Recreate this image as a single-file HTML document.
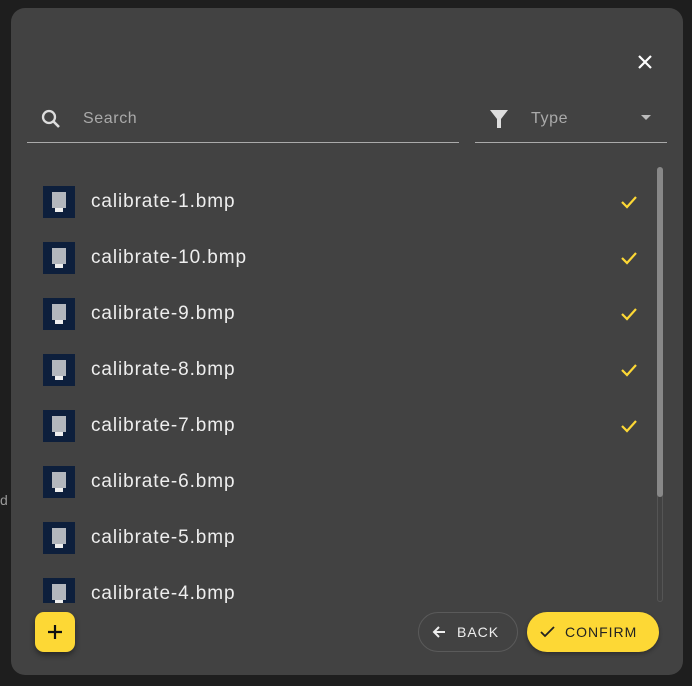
<!DOCTYPE html>
<html><head><style>
body{margin:0;width:692px;height:686px;background:#1e1e1e;font-family:"Liberation Sans",sans-serif;position:relative;overflow:hidden}
.d{position:absolute;left:11px;top:8px;width:672px;height:667px;background:#424242;border-radius:14px}
.a{position:absolute}
.row{position:absolute;left:43px;height:32px;width:600px}
.th{position:absolute;left:0;top:0;width:32px;height:32px;background:#0d1f3c}
.th i{position:absolute;left:9px;top:6px;width:14px;height:16px;background:#ddd;opacity:.8}
.th b{position:absolute;left:12px;top:22px;width:8px;height:4px;background:#eee}
.row span{position:absolute;left:48px;top:5px;font-size:19px;letter-spacing:0.9px;color:#eee}
.ck{position:absolute;left:576px;top:6px}
</style></head><body>
<div class="a" style="left:0;top:492px;color:#999;font-size:14px">d</div>
<div class="d"></div>
<svg class="a" style="left:636px;top:53px" width="18" height="18"><path d="M3 3L15 15M15 3L3 15" stroke="#fff" stroke-width="2.2"/></svg>
<svg class="a" style="left:40px;top:108px" width="22" height="22"><circle cx="9" cy="9" r="6" stroke="#ddd" stroke-width="2.3" fill="none"/><path d="M13 13L19 19" stroke="#ddd" stroke-width="2.6"/></svg>
<div class="a" style="left:83px;top:110px;font-size:16px;letter-spacing:0.6px;color:#aaa">Search</div>
<div class="a" style="left:27px;top:142px;width:432px;height:1px;background:#aaa"></div>
<svg class="a" style="left:489px;top:109px" width="20" height="20"><path d="M1 1H19L12 10V19H8V10Z" fill="#ddd"/></svg>
<div class="a" style="left:531px;top:110px;font-size:16px;letter-spacing:0.6px;color:#aaa">Type</div>
<svg class="a" style="left:640px;top:114px" width="12" height="8"><path d="M1 1H11L6 6Z" fill="#bbb"/></svg>
<div class="a" style="left:475px;top:142px;width:192px;height:1px;background:#aaa"></div>
<div class="a" style="left:657px;top:167px;width:6px;height:435px;border:1px solid #555;border-radius:4px;box-sizing:border-box"></div>
<div class="a" style="left:657px;top:167px;width:6px;height:330px;background:#888;border-radius:4px"></div>
<div class="a" style="left:0;top:160px;width:692px;height:443px;overflow:hidden">
<div class="row" style="top:26px"><div class="th"><i></i><b></b></div><span>calibrate-1.bmp</span><svg class="ck" width="20" height="20"><path d="M3 10L8 15L17 5" stroke="#fdd835" stroke-width="2.2" fill="none"/></svg></div>
<div class="row" style="top:82px"><div class="th"><i></i><b></b></div><span>calibrate-10.bmp</span><svg class="ck" width="20" height="20"><path d="M3 10L8 15L17 5" stroke="#fdd835" stroke-width="2.2" fill="none"/></svg></div>
<div class="row" style="top:138px"><div class="th"><i></i><b></b></div><span>calibrate-9.bmp</span><svg class="ck" width="20" height="20"><path d="M3 10L8 15L17 5" stroke="#fdd835" stroke-width="2.2" fill="none"/></svg></div>
<div class="row" style="top:194px"><div class="th"><i></i><b></b></div><span>calibrate-8.bmp</span><svg class="ck" width="20" height="20"><path d="M3 10L8 15L17 5" stroke="#fdd835" stroke-width="2.2" fill="none"/></svg></div>
<div class="row" style="top:250px"><div class="th"><i></i><b></b></div><span>calibrate-7.bmp</span><svg class="ck" width="20" height="20"><path d="M3 10L8 15L17 5" stroke="#fdd835" stroke-width="2.2" fill="none"/></svg></div>
<div class="row" style="top:306px"><div class="th"><i></i><b></b></div><span>calibrate-6.bmp</span></div>
<div class="row" style="top:362px"><div class="th"><i></i><b></b></div><span>calibrate-5.bmp</span></div>
<div class="row" style="top:418px"><div class="th"><i></i><b></b></div><span>calibrate-4.bmp</span></div>
</div>
<div class="a" style="left:35px;top:612px;width:40px;height:40px;background:#fdd835;border-radius:9px;box-shadow:0 3px 6px rgba(0,0,0,.4)"><svg width="40" height="40"><path d="M20 13V27M13 20H27" stroke="#111" stroke-width="2.2"/></svg></div>
<div class="a" style="left:418px;top:612px;width:100px;height:40px;border:1px solid #5a5a5a;border-radius:20px;box-sizing:border-box;color:#eee;font-size:14px;letter-spacing:1px;line-height:38px"><svg class="a" style="left:13px;top:12px" width="14" height="14"><path d="M13 7H2M7 2L2 7L7 12" stroke="#eee" stroke-width="2" fill="none"/></svg><span class="a" style="left:38px">BACK</span></div>
<div class="a" style="left:527px;top:612px;width:132px;height:40px;background:#fdd835;border-radius:20px;color:#222;font-size:14px;letter-spacing:1px;line-height:40px;box-shadow:0 2px 4px rgba(0,0,0,.3)"><svg class="a" style="left:13px;top:13px" width="16" height="14"><path d="M1 7L5 11L14 2" stroke="#222" stroke-width="1.8" fill="none"/></svg><span class="a" style="left:38px">CONFIRM</span></div>
</body></html>
